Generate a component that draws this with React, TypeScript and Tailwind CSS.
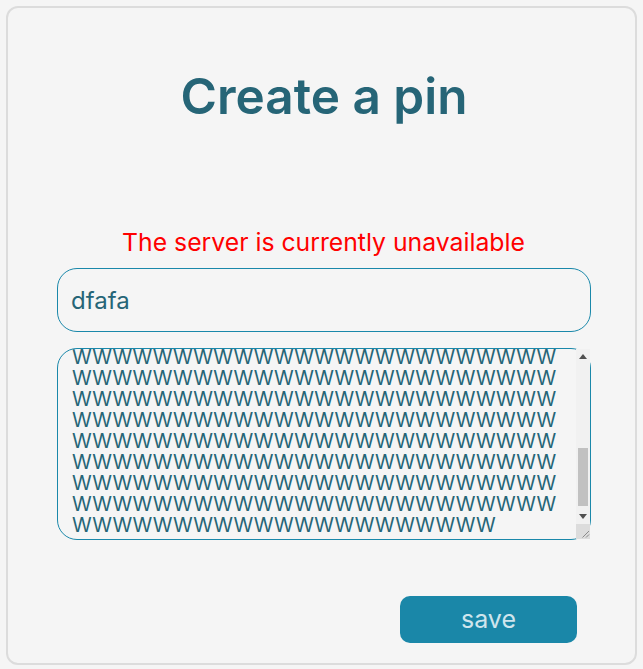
import React, { useEffect, useRef } from "react";

export default function App() {
  const ref = useRef<HTMLTextAreaElement>(null);
  useEffect(() => {
    if (ref.current) ref.current.scrollTop = ref.current.scrollHeight;
  }, []);
  const text = "W".repeat(22 * 24 + 21);
  return (
    <div
      className="min-h-screen bg-[#f5f5f5] p-[6px]"
      style={{ fontFamily: "Inter, 'Noto Sans', sans-serif" }}
    >
      <div className="flex h-[659px] flex-col rounded-[12px] border-2 border-[#dcdcdc] bg-[#f5f5f5]">
        <h1 className="mt-[59px] pl-[5px] text-center text-[49.5px] font-semibold leading-[58px] text-[#266577]">
          Create a pin
        </h1>
        <p className="mt-[102px] pl-[4px] text-center text-[24.75px] leading-[30px] text-[#ff0000]">
          The server is currently unavailable
        </p>
        <input
          className="ml-[49px] mt-[11px] h-[64px] w-[534px] rounded-[20px] border border-[#1a88aa] bg-transparent px-[13px] text-[24px] text-[#266577] outline-none"
          defaultValue="dfafa"
        />
        <div className="relative ml-[49px] mt-[16px] h-[192px] w-[534px]">
          <textarea
            ref={ref}
            className="block h-full w-full resize-none overflow-y-scroll rounded-[20px] border border-[#1a88aa] bg-transparent pl-[14px] pr-[29px] pt-[4px] pb-[3px] text-[20px] leading-[21px] text-[#266577] outline-none [scrollbar-width:none] [&::-webkit-scrollbar]:hidden"
            defaultValue={text}
          />
          <div className="absolute bottom-[1px] right-[1px] top-[1px] flex w-[14px] flex-col bg-[#f1f1f1]">
            <div className="flex h-[15px] items-center justify-center">
              <svg width="8" height="5" viewBox="0 0 8 5">
                <path d="M0 5 L4 0 L8 5 Z" fill="#505050" />
              </svg>
            </div>
            <div className="flex flex-1 flex-col">
              <div className="ml-[2px] mt-[84px] h-[58px] w-[10px] bg-[#c1c1c1]" />
            </div>
            <div className="flex h-[15px] items-center justify-center">
              <svg width="8" height="5" viewBox="0 0 8 5">
                <path d="M0 0 L8 0 L4 5 Z" fill="#505050" />
              </svg>
            </div>
            <div className="h-[15px] bg-[#dcdcdc]">
              <svg width="14" height="15" viewBox="0 0 14 15">
                <path d="M6.5 13.5 L13 7 M10 13.5 L13 10.5" stroke="#8a8a8a" strokeWidth="1" />
              </svg>
            </div>
          </div>
        </div>
        <div className="mt-[56px] flex justify-end pr-[58px]">
          <button className="h-[47px] w-[177px] rounded-[10px] bg-[#1a87a8] text-[25px] text-[#cfe5ed]">
            save
          </button>
        </div>
      </div>
    </div>
  );
}
